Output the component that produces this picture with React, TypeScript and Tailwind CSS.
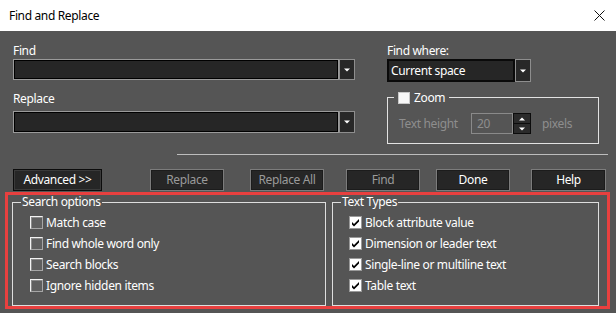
import React from "react";

const font = { fontFamily: '"Noto Sans", "Open Sans", sans-serif' };

function Tri({ up = false }: { up?: boolean }) {
  return (
    <svg width="6" height="4" viewBox="0 0 6 4">
      {up ? <polygon points="0,3.5 6,3.5 3,0.5" fill="#ffffff" /> : <polygon points="0,0.5 6,0.5 3,3.5" fill="#ffffff" />}
    </svg>
  );
}

function Combo({ h, focused = false, text }: { h: string; focused?: boolean; text?: string }) {
  return (
    <div className={`flex w-full ${h}`}>
      <div
        className={`flex-1 flex items-center bg-[#262626] ${
          focused ? "border-2 border-[#0a0a0a] pl-[2px]" : "border border-[#9a9a9a] shadow-[inset_0_0_0_1px_#000]"
        }`}
      >
        {text && <span className="text-white text-[12px] leading-[16px]">{text}</span>}
      </div>
      <div className="w-[16px] flex items-center justify-center bg-[#282828] border border-[#8e8e8e]">
        <Tri />
      </div>
    </div>
  );
}

function Btn({ label, w, ml, enabled = true, def = false }: { label: string; w: string; ml: string; enabled?: boolean; def?: boolean }) {
  return (
    <div
      className={`${w} ${ml} h-[22px] flex items-center justify-center bg-[#262626] border text-[12px] leading-[16px] ${
        def ? "border-[#0c0c0c] shadow-[inset_0_0_0_1px_#3a3a3a]" : "border-[#7c7c7c] shadow-[inset_0_0_0_1px_#1c1c1c]"
      } ${enabled ? "text-white" : "text-[#9a9a9a]"}`}
    >
      {label}
    </div>
  );
}

function Unchecked() {
  return (
    <div className="w-[13px] h-[13px] border border-t-[#f2f2f2] border-l-[#f2f2f2] border-r-[#a6a6a6] border-b-[#a6a6a6] bg-[#5f5f5f] shadow-[inset_1px_1px_0_#8a8a8a]" />
  );
}

function Checked() {
  return (
    <div className="w-[13px] h-[13px] border border-[#9a9a9a] bg-white flex items-center justify-center">
      <svg width="9" height="9" viewBox="0 0 9 9">
        <polygon points="1,4 3,6 8,1 8,3.5 3,8.5 1,6.5" fill="#000" />
      </svg>
    </div>
  );
}

function Row({ label, checked }: { label: string; checked: boolean }) {
  return (
    <div className="h-[21px] flex items-center gap-[3px]">
      {checked ? <Checked /> : <Unchecked />}
      <span className="text-white text-[12px] leading-[16px]">{label}</span>
    </div>
  );
}

export default function App() {
  return (
    <div className="w-[616px] h-[313px] bg-[#555555] overflow-hidden flex flex-col tracking-[-0.35px]" style={font}>
      {/* Title bar */}
      <div className="h-[31px] bg-white flex items-center justify-between pl-[9px] pr-[11px] shrink-0">
        <span className="text-black text-[12px] leading-[16px]">Find and Replace</span>
        <svg width="11" height="11" viewBox="0 0 11 11">
          <path d="M0.5 0.5 L10.5 10.5 M10.5 0.5 L0.5 10.5" stroke="#111" strokeWidth="1" />
        </svg>
      </div>

      {/* Top section */}
      <div className="flex pl-[13px]">
        <div className="w-[342px] pt-[12px] flex flex-col">
          <div className="text-white text-[12px] leading-[16px] h-[16px]">Find</div>
          <Combo h="h-[21px]" />
          <div className="mt-[11px] text-white text-[12px] leading-[16px] h-[16px]">Replace</div>
          <div className="mt-[4px]">
            <Combo h="h-[22px]" />
          </div>
        </div>

        <div className="ml-[32px] w-[212px] pt-[12px] flex flex-col">
          <div className="text-white text-[12px] leading-[16px] h-[16px]">Find where:</div>
          <div className="w-[144px]">
            <Combo h="h-[23px]" focused text="Current space" />
          </div>
          <fieldset className="mt-[8px] border border-[#e2e2e2] w-[212px] p-0 m-0">
            <legend className="ml-[6px] px-[4px] h-[14px] leading-[14px]">
              <div className="flex items-center gap-[4px] mt-[1px]">
                <div className="w-[12px] h-[12px] bg-[#f7f7f7] border border-[#c8c8c8]" />
                <span className="text-white text-[12px] leading-[14px]">Zoom</span>
              </div>
            </legend>
            <div className="flex items-center pl-[11px] pt-[9px] pb-[9px]">
              <span className="w-[72px] text-[#8e8e8e] text-[12px] leading-[16px]">Text height</span>
              <div className="flex h-[21px] w-[60px]">
                <div className="flex-1 border border-[#8a8a8a] flex items-center pl-[5px] text-[#8e8e8e] text-[12px] leading-[16px]">
                  20
                </div>
                <div className="w-[18px] flex flex-col bg-[#2b2b2b]">
                  <div className="flex-1 border border-[#0c0c0c] flex items-center justify-center">
                    <Tri up />
                  </div>
                  <div className="flex-1 border border-t-0 border-[#0c0c0c] flex items-center justify-center">
                    <Tri />
                  </div>
                </div>
              </div>
              <span className="ml-[11px] text-[#8e8e8e] text-[12px] leading-[16px]">pixels</span>
            </div>
          </fieldset>
        </div>
      </div>

      {/* Separator */}
      <div className="mt-[10px] ml-[177px] w-[431px] h-px bg-[#bdbdbd] shrink-0" />

      {/* Buttons */}
      <div className="mt-[14px] flex shrink-0">
        <Btn label="Advanced >>" w="w-[89px]" ml="ml-[13px]" def />
        <Btn label="Replace" w="w-[74px]" ml="ml-[48px]" enabled={false} />
        <Btn label="Replace All" w="w-[74px]" ml="ml-[26px]" enabled={false} />
        <Btn label="Find" w="w-[74px]" ml="ml-[22px]" enabled={false} />
        <Btn label="Done" w="w-[74px]" ml="ml-[16px]" />
        <Btn label="Help" w="w-[75px]" ml="ml-[21px]" />
      </div>

      {/* Highlighted options */}
      <div className="mt-[1px] ml-[5px] w-[605px] h-[117px] border-[3px] border-[#e8403f] flex gap-[6px] pl-[4px] shrink-0">
        <fieldset className="w-[314px] h-[111px] border border-[#dedede] m-0 p-0">
          <legend className="ml-[8px] px-[1px] h-[14px] leading-[14px] text-white text-[12px]">Search options</legend>
          <div className="pt-[3px] pl-[17px] flex flex-col">
            <Row label="Match case" checked={false} />
            <Row label="Find whole word only" checked={false} />
            <Row label="Search blocks" checked={false} />
            <Row label="Ignore hidden items" checked={false} />
          </div>
        </fieldset>
        <fieldset className="w-[267px] h-[111px] border border-[#dedede] m-0 p-0">
          <legend className="ml-[8px] px-[1px] h-[14px] leading-[14px] text-white text-[12px]">Text Types</legend>
          <div className="pt-[3px] pl-[16px] flex flex-col">
            <Row label="Block attribute value" checked />
            <Row label="Dimension or leader text" checked />
            <Row label="Single-line or multiline text" checked />
            <Row label="Table text" checked />
          </div>
        </fieldset>
      </div>
    </div>
  );
}
